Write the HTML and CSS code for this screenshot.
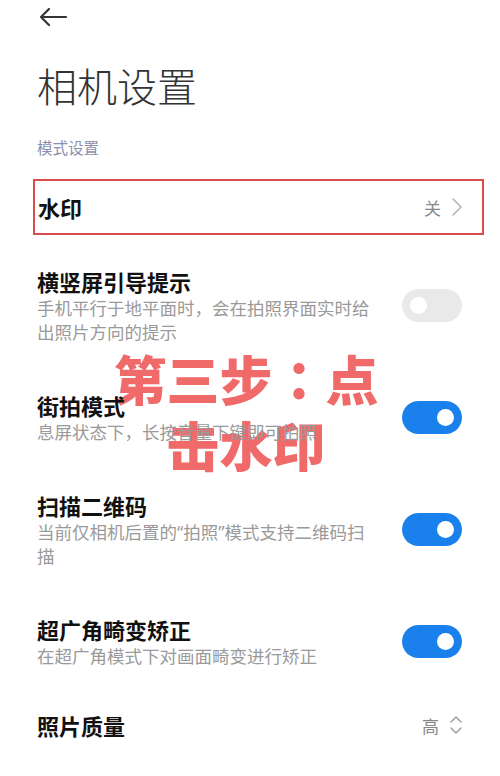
FILE: index.html
```html
<!DOCTYPE html>
<html lang="zh-CN">
<head>
<meta charset="utf-8">
<title>相机设置</title>
<link rel="stylesheet" href="styles.css">
</head>
<body>
<div class="page">
  <div class="topbar">
    <svg class="back" width="30" height="20" viewBox="0 0 30 20">
      <path d="M3 10 H28 M11 2 L3 10 L11 18" fill="none" stroke="#333" stroke-width="2.2" stroke-linecap="round" stroke-linejoin="round"/>
    </svg>
  </div>
  <h1 class="title">相机设置</h1>
  <div class="section">模式设置</div>

  <div class="row row-link highlight">
    <div class="row-title">水印</div>
    <div class="row-value">
      <span>关</span>
      <svg width="12" height="20" viewBox="0 0 12 20"><path d="M2 2 L10 10 L2 18" fill="none" stroke="#b0b0b0" stroke-width="1.5" stroke-linecap="round" stroke-linejoin="round"/></svg>
    </div>
  </div>

  <div class="row">
    <div class="row-text">
      <div class="row-title">横竖屏引导提示</div>
      <div class="row-sub">手机平行于地平面时，会在拍照界面实时给出照片方向的提示</div>
    </div>
    <div class="toggle off"><span class="knob"></span></div>
  </div>

  <div class="row">
    <div class="row-text">
      <div class="row-title">街拍模式</div>
      <div class="row-sub">息屏状态下，长按音量下键即可拍照</div>
    </div>
    <div class="toggle on"><span class="knob"></span></div>
  </div>

  <div class="row">
    <div class="row-text">
      <div class="row-title">扫描二维码</div>
      <div class="row-sub">当前仅相机后置的<span class="q">“</span>拍照<span class="q">”</span>模式支持二维码扫描</div>
    </div>
    <div class="toggle on"><span class="knob"></span></div>
  </div>

  <div class="row">
    <div class="row-text">
      <div class="row-title">超广角畸变矫正</div>
      <div class="row-sub">在超广角模式下对画面畸变进行矫正</div>
    </div>
    <div class="toggle on"><span class="knob"></span></div>
  </div>

  <div class="row row-link quality">
    <div class="row-title">照片质量</div>
    <div class="row-value">
      <span>高</span>
      <svg width="14" height="22" viewBox="0 0 14 22"><path d="M2 8 L7 3 L12 8 M2 14 L7 19 L12 14" fill="none" stroke="#a0a0a0" stroke-width="1.5" stroke-linecap="round" stroke-linejoin="round"/></svg>
    </div>
  </div>

  <div class="overlay">第三步<span class="colon" lang="zh-TW">：</span>点<br>击水印</div>
</div>
</body>
</html>
```

FILE: styles.css
```css
html {
  margin: 0;
  padding: 0;
  background: #ffffff;
}
body {
  margin: 0;
  padding: 0;
  font-family: "Noto Sans CJK SC", "Noto Sans", sans-serif;
  color: #111;
  width: 500px;
  height: 776px;
  overflow: hidden;
}
.page {
  padding: 0 37px 0 37px;
}
.topbar {
  height: 34px;
  display: flex;
  align-items: center;
}
.back {
  margin-left: 1px;
}
.title {
  margin: 27px 0 0 0;
  font-size: 40px;
  line-height: 48px;
  font-weight: 300;
  color: #333;
}
.section {
  margin-top: 27px;
  font-size: 15.5px;
  line-height: 22px;
  color: #8a8fae;
}
.row {
  display: flex;
  align-items: center;
  justify-content: space-between;
  padding: 23px 0;
  gap: 10px;
}
.row-link {
  padding: 0;
}
.highlight {
  margin: 21px -21px 8px -4px;
  height: 52px;
  border: 2px solid #dd4c4c;
  padding: 0 19px 0 3px;
}
.quality {
  padding-top: 19px;
}
.row-title {
  font-size: 22px;
  line-height: 30px;
  font-weight: 700;
  color: #111;
}
.row-sub {
  font-size: 17.5px;
  line-height: 24px;
  color: #9a9a9a;
}
.q {
  font-family: "Noto Sans", sans-serif;
}
.row-text {
  flex: 0 1 345px;
}
.row-value {
  display: flex;
  align-items: center;
  gap: 10px;
  font-size: 17px;
  color: #888;
}
.toggle {
  flex: none;
  width: 60px;
  height: 33px;
  border-radius: 17px;
  position: relative;
  margin-right: 1px;
}
.toggle.on {
  background: #1a80ec;
}
.toggle.off {
  background: #e9e9e9;
}
.knob {
  position: absolute;
  top: 8px;
  width: 17px;
  height: 17px;
  border-radius: 50%;
  background: #ffffff;
}
.toggle.on .knob {
  right: 8px;
}
.toggle.off .knob {
  left: 8px;
}
.overlay {
  position: absolute;
  left: 100px;
  top: 345px;
  width: 292px;
  text-align: center;
  font-size: 53px;
  line-height: 66px;
  font-weight: 900;
  color: #f06a6a;
  z-index: -1;
}
.colon {
  font-family: "Noto Sans CJK TC", "Noto Sans CJK SC", sans-serif;
}
```
